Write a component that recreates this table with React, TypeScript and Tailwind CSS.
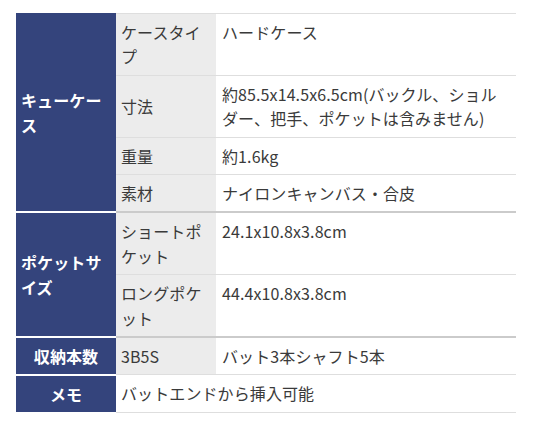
const font = { fontFamily: '"Noto Sans CJK JP", "Noto Sans", sans-serif' };

type Row = { label: string; value: string };

const sections: { head: string; rows: Row[]; thick: boolean }[] = [
  {
    head: 'キューケース',
    thick: true,
    rows: [
      { label: 'ケースタイプ', value: 'ハードケース' },
      { label: '寸法', value: '約85.5x14.5x6.5cm(バックル、ショルダー、把手、ポケットは含みません)' },
      { label: '重量', value: '約1.6kg' },
      { label: '素材', value: 'ナイロンキャンバス・合皮' },
    ],
  },
  {
    head: 'ポケットサイズ',
    thick: true,
    rows: [
      { label: 'ショートポケット', value: '24.1x10.8x3.8cm' },
      { label: 'ロングポケット', value: '44.4x10.8x3.8cm' },
    ],
  },
  {
    head: '収納本数',
    thick: false,
    rows: [{ label: '3B5S', value: 'バット3本シャフト5本' }],
  },
];

export default function App() {
  return (
    <div className="min-h-screen bg-white px-4 pt-[13px]" style={font}>
      <table className="w-[500px] table-fixed border-collapse text-[16px] leading-[24.4px] tracking-[0.1px] text-[#3a3a3a]">
        <colgroup>
          <col className="w-[100px]" />
          <col className="w-[100px]" />
          <col className="w-[300px]" />
        </colgroup>
        <tbody>
          {sections.map((s, si) =>
            s.rows.map((r, ri) => {
              const end = ri === s.rows.length - 1;
              const line = end && s.thick ? 'border-b-2 border-[#cbcbcb]' : 'border-b border-[#dedede]';
              const top = si === 0 && ri === 0 ? 'border-t border-[#dedede]' : '';
              return (
                <tr key={r.label}>
                  {ri === 0 && (
                    <th
                      rowSpan={s.rows.length}
                      className={`bg-[#34447c] px-[5px] text-center align-middle font-bold text-white border-b-2 border-white ${si === 0 ? 'border-t border-t-[#34447c]' : ''}`}
                    >
                      <span className="inline-block text-left">{s.head}</span>
                    </th>
                  )}
                  <td className={`bg-[#ececec] px-[5px] py-1.5 align-middle ${line} ${top}`}>{r.label}</td>
                  <td className={`bg-white px-1.5 py-1.5 align-top ${line} ${top}`}>{r.value}</td>
                </tr>
              );
            })
          )}
          <tr>
            <th className="bg-[#34447c] px-[5px] text-center align-middle font-bold text-white">
              メモ
            </th>
            <td colSpan={2} className="bg-white px-[5px] py-1.5 align-top border-b border-[#dedede]">
              バットエンドから挿入可能
            </td>
          </tr>
        </tbody>
      </table>
    </div>
  );
}
